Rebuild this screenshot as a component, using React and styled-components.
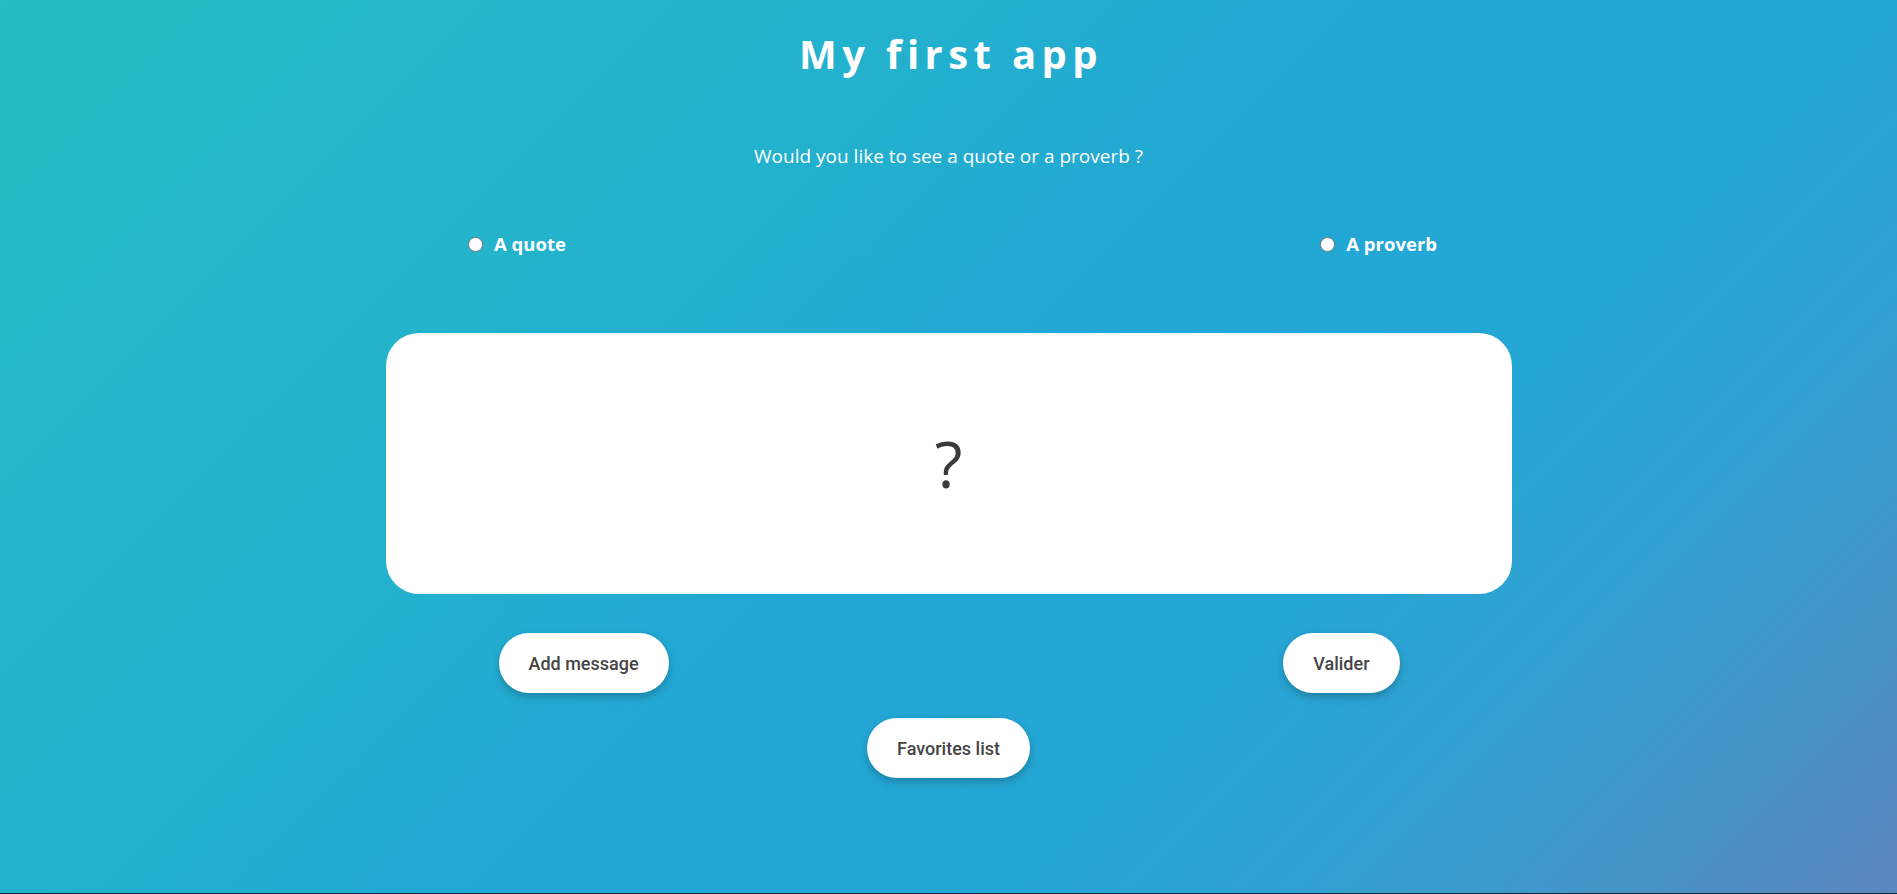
import React, { useState } from "react";
import styled, { createGlobalStyle } from "styled-components";

const GlobalStyle = createGlobalStyle`
  html, body {
    margin: 0;
    padding: 0;
    background: #0f2a38;
  }
  * {
    box-sizing: border-box;
  }
`;

const Page = styled.div`
  min-height: 893px;
  display: flex;
  flex-direction: column;
  align-items: center;
  font-family: "Open Sans", "Noto Sans", sans-serif;
  color: #ffffff;
  background: linear-gradient(
    -45deg,
    #5c86bf 0%,
    #4694c8 10%,
    #33a0d0 20%,
    #24a6d5 32%,
    #22a7d4 50%,
    #23b2cd 68%,
    #24bdc3 100%
  );
`;

const Title = styled.h1`
  margin: 30px 0 0;
  padding-left: 5px;
  font-size: 40px;
  line-height: 48px;
  font-weight: 700;
  letter-spacing: 5.4px;
`;

const Question = styled.p`
  margin: 66px 0 0;
  font-size: 19px;
  line-height: 24px;
`;

const RadioRow = styled.div`
  width: 977px;
  padding-left: 8px;
  margin-top: 64px;
  display: flex;
  justify-content: space-between;
  align-items: center;
`;

const RadioLabel = styled.label`
  display: flex;
  align-items: center;
  gap: 11px;
  font-size: 18.5px;
  line-height: 24px;
  font-weight: 700;
  cursor: pointer;
`;

const Radio = styled.input`
  appearance: none;
  margin: 0;
  width: 15px;
  height: 15px;
  border-radius: 50%;
  background: #ffffff;
  border: 1px solid #767676;
  cursor: pointer;
  &:checked {
    box-shadow: inset 0 0 0 3px #ffffff;
    background: #1a73e8;
  }
`;

const Card = styled.div`
  margin-top: 77px;
  width: 1126px;
  height: 261px;
  border-radius: 33px;
  background: #ffffff;
  display: flex;
  align-items: center;
  justify-content: center;
  color: #3b3b3b;
  font-size: 64px;
  line-height: 1;
`;

const ButtonRow = styled.div`
  margin-top: 39px;
  width: 1126px;
  padding: 0 112px 0 113px;
  display: flex;
  justify-content: space-between;
`;

const Button = styled.button`
  height: 60px;
  padding: 0 30px;
  border: none;
  border-radius: 30px;
  background: #ffffff;
  color: #454545;
  font-family: Roboto, "Liberation Sans", sans-serif;
  font-size: 18px;
  font-weight: 500;
  box-shadow: 0 4px 8px rgba(0, 0, 0, 0.22);
  cursor: pointer;
  margin-top: ${(p) => p.$top || 0}px;
`;

export default function App() {
  const [choice, setChoice] = useState("");

  return (
    <>
      <GlobalStyle />
      <Page>
        <Title>My first app</Title>
        <Question>Would you like to see a quote or a proverb ?</Question>
        <RadioRow>
          <RadioLabel>
            <Radio
              type="radio"
              name="kind"
              checked={choice === "quote"}
              onChange={() => setChoice("quote")}
            />
            A quote
          </RadioLabel>
          <RadioLabel>
            <Radio
              type="radio"
              name="kind"
              checked={choice === "proverb"}
              onChange={() => setChoice("proverb")}
            />
            A proverb
          </RadioLabel>
        </RadioRow>
        <Card>?</Card>
        <ButtonRow>
          <Button>Add message</Button>
          <Button>Valider</Button>
        </ButtonRow>
        <Button $top={25}>Favorites list</Button>
      </Page>
    </>
  );
}
